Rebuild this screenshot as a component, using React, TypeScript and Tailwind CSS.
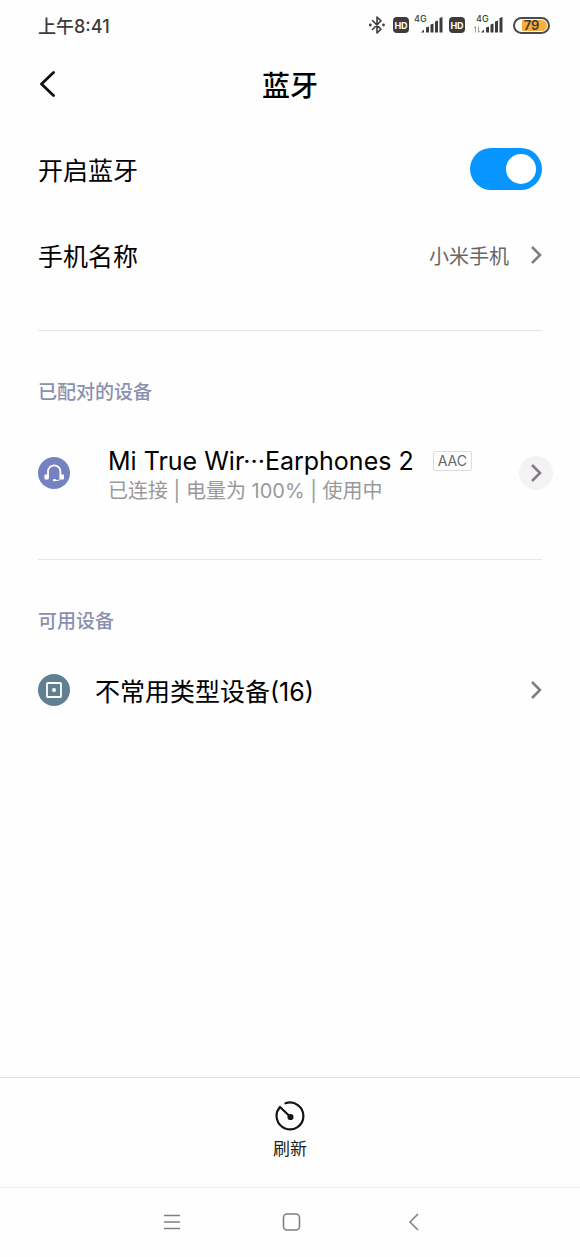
import { useState } from 'react';

interface SignalProps {
  transfer?: boolean;
}

function BluetoothIcon() {
  return (
    <svg width="16" height="20" viewBox="0 0 16 20" fill="none" stroke="#3c3c3c" strokeWidth="1.6" strokeLinejoin="round" strokeLinecap="round">
      <path d="M3.5 5.5 12 14.2 8 18V2l4 3.8-8.5 8.7" />
      <circle cx="1.3" cy="10" r="0.6" fill="#3c3c3c" />
      <circle cx="14.5" cy="10" r="0.6" fill="#3c3c3c" />
    </svg>
  );
}

function HdBadge() {
  return (
    <span className="flex h-4 w-4 items-center justify-center rounded-sm bg-[#3c3c3c] text-[9px] leading-none font-bold text-white">
      HD
    </span>
  );
}

function Signal({ transfer = false }: SignalProps) {
  return (
    <svg width="32" height="26" viewBox="0 -3 32 26" fill="#3c3c3c">
      <text x={transfer ? 3 : 1} y="7" fontSize="9" fontWeight="500">
        4G
      </text>
      {transfer && (
        <path d="M2.5 17.500v-6l-1.500 1.500M5.500 11.500v6l1.500-1.500" fill="none" stroke="#8a8a8a" strokeWidth="0.8" />
      )}
      <path d="M8 17.500 11 14.500v3zM13 12.500l3-1v6h-3zM17.500 9.500l3-1v9h-3zM22 6.500l3-1v12h-3zM26.500 3l3-1v15.500h-3z" />
    </svg>
  );
}

function StatusBar() {
  return (
    <div className="flex h-[52px] items-center justify-between pr-[30px] pl-[38px] text-[#3c3c3c]">
      <span className="pt-0.5 text-lg font-medium">上午8:41</span>
      <div className="flex items-center pb-0.5">
        <BluetoothIcon />
        <div className="ml-2 flex items-center gap-1">
          <HdBadge />
          <Signal />
        </div>
        <div className="ml-1 flex items-center gap-2">
          <HdBadge />
          <Signal transfer />
        </div>
        <div className="ml-2 flex h-[17px] w-[37px] rounded-full border-2 border-[#4a4a4a] p-px">
          <div className="flex flex-1 items-center justify-center rounded-full bg-linear-to-r from-white from-20% to-[#f9ae3a] to-20% text-[13px] leading-none font-semibold">
            79
          </div>
        </div>
      </div>
    </div>
  );
}

function Chevron() {
  return (
    <svg width="12" height="20" viewBox="0 0 12 20" fill="none" stroke="#808080" strokeWidth="2.6">
      <path d="M2 2 10 10l-8 8" />
    </svg>
  );
}

function HeadsetIcon() {
  return (
    <svg width="32" height="32" viewBox="0 0 32 32" fill="none" className="shrink-0">
      <circle cx="16" cy="16" r="16" fill="#7681c1" />
      <path d="M10 21v-6.500a6.200 6.200 0 0 1 12.400 0V21" stroke="white" strokeWidth="1.800" />
      <rect x="6.500" y="17.500" width="4.200" height="5" rx="0.800" fill="white" />
      <rect x="21.700" y="17.500" width="4.200" height="5" rx="0.800" fill="white" />
      <path d="M22.500 22c-1.200 1.300-3 1.700-5.500 1.500" stroke="white" strokeWidth="1" />
      <ellipse cx="16.500" cy="23.200" rx="1.800" ry="1.100" fill="white" />
    </svg>
  );
}

function OtherDeviceIcon() {
  return (
    <svg width="32" height="32" viewBox="0 0 32 32" fill="none" className="shrink-0">
      <circle cx="16" cy="16" r="16" fill="#607f91" />
      <rect x="9" y="9" width="14" height="14" rx="0.800" stroke="white" strokeWidth="1.800" />
      <circle cx="16" cy="16" r="2" fill="white" />
    </svg>
  );
}

export default function App() {
  const [enabled, setEnabled] = useState(true);

  return (
    <div className="flex min-h-screen flex-col bg-[#fefefe] font-[Inter,'Noto_Sans_CJK_SC',sans-serif] text-black">
      <StatusBar />

      <header className="grid h-16 grid-cols-[1fr_auto_1fr] items-center px-[38px]">
        <button type="button" aria-label="返回" className="justify-self-start">
          <svg width="18" height="26" viewBox="0 0 18 26" fill="none" stroke="#111" strokeWidth="2.8" strokeLinecap="round" strokeLinejoin="round">
            <path d="M15.500 1.500 3.500 13l12 11.500" />
          </svg>
        </button>
        <h1 className="pt-1 text-[28px] leading-9 font-medium">蓝牙</h1>
      </header>

      <main className="flex-1 px-[38px] pt-[10px]">
        <div className="flex h-[86px] items-center justify-between">
          <label htmlFor="bluetooth" className="pt-1 text-[25px] leading-9">
            开启蓝牙
          </label>
          <input
            id="bluetooth"
            type="checkbox"
            role="switch"
            checked={enabled}
            onChange={(e) => setEnabled(e.target.checked)}
            className="grid h-[42px] w-[72px] cursor-pointer appearance-none items-center rounded-full bg-gray-300 px-[6px] before:h-[30px] before:w-[30px] before:rounded-full before:bg-white checked:justify-items-end checked:bg-[#0795ff]"
          />
        </div>
        <button type="button" className="flex h-[86px] w-full items-center">
          <span className="pt-1 text-[25px] leading-9">手机名称</span>
          <span className="mr-[21px] ml-auto pt-1 text-xl text-[#666]">小米手机</span>
          <Chevron />
        </button>

        {/* Paired devices */}
        <section className="mt-8 border-t border-[#e6e6e6] pt-12">
          <h2 className="text-[19px] leading-7 font-medium text-[#8b90b0]">已配对的设备</h2>
          <div className="mt-[34px] flex h-[64px] items-center">
            <HeadsetIcon />
            <div className="ml-[38px] min-w-0 pt-[3px]">
              <div className="flex items-center gap-[19px]">
                <span className="text-[25px] leading-8 whitespace-nowrap">Mi True Wir···Earphones 2</span>
                <span className="flex h-5 items-center rounded-xs border border-[#dcdcdc] px-1 text-sm leading-none text-[#666]">
                  AAC
                </span>
              </div>
              <p className="text-xl leading-7 whitespace-nowrap text-[#999]">已连接 | 电量为 100% | 使用中</p>
            </div>
            <button
              type="button"
              aria-label="设备详情"
              className="-mr-[11px] ml-auto flex h-[34px] w-[34px] shrink-0 items-center justify-center rounded-full bg-[#f5f2f6]"
            >
              <Chevron />
            </button>
          </div>
        </section>

        {/* Available devices */}
        <section className="mt-[54px] border-t border-[#e6e6e6] pt-12">
          <h2 className="text-[19px] leading-7 font-medium text-[#8b90b0]">可用设备</h2>
          <button type="button" className="mt-[22px] flex h-[64px] w-full items-center">
            <OtherDeviceIcon />
            <span className="ml-[25px] pt-1 text-[25px] leading-9">不常用类型设备(16)</span>
            <span className="ml-auto">
              <Chevron />
            </span>
          </button>
        </section>
      </main>

      <footer className="flex h-[110px] justify-center border-t border-[#e0e0e0] pt-[22px]">
        <button type="button" className="flex flex-col items-center gap-[5px] self-start">
          <svg width="32" height="32" viewBox="0 0 32 32" fill="none" stroke="#151515" strokeWidth="2.2" strokeLinecap="round">
            <path d="M11.500 3.300A13.400 13.400 0 1 1 6 7l10 9.500" strokeLinejoin="round" />
            <circle cx="16.500" cy="17" r="2" fill="#151515" />
          </svg>
          <span className="text-[17px] leading-6 text-[#222]">刷新</span>
        </button>
      </footer>

      <nav className="flex h-[70px] items-center justify-between border-t border-[#ececec] pr-[154px] pl-[160px]">
        <button type="button" aria-label="最近任务">
          <svg width="24" height="24" viewBox="0 0 24 24" stroke="#808080" strokeWidth="1.6">
            <path d="M4 4.500h16M4 11h16M4 17.500h16" />
          </svg>
        </button>
        <button type="button" aria-label="主屏幕">
          <svg width="24" height="24" viewBox="0 0 24 24" fill="none" stroke="#808080" strokeWidth="1.6">
            <rect x="2.500" y="3" width="16" height="16" rx="3.500" />
          </svg>
        </button>
        <button type="button" aria-label="返回上一页">
          <svg width="24" height="24" viewBox="0 0 24 24" fill="none" stroke="#808080" strokeWidth="1.6">
            <path d="M16 3 8 11l8 8" />
          </svg>
        </button>
      </nav>
    </div>
  );
}
